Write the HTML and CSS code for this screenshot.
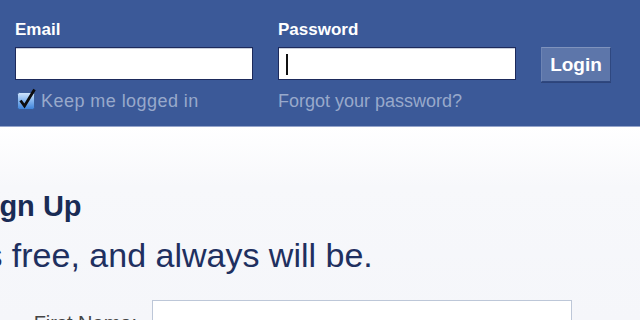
FILE: index.html
```html
<!DOCTYPE html>
<html>
<head>
<meta charset="utf-8">
<link rel="stylesheet" href="styles.css">
</head>
<body>
<div class="topbar">
  <form class="login">
    <label class="lbl">Email</label>
    <label class="lbl">Password</label>
    <span></span>
    <div class="field"></div>
    <div class="field"><span class="caret"></span></div>
    <button type="button" class="btn">Login</button>
    <div class="keep">
      <svg class="check" width="22" height="23" viewBox="0 0 22 23">
        <defs>
          <linearGradient id="cb" x1="0" y1="0" x2="0" y2="1">
            <stop offset="0" stop-color="#d3e6fc"/>
            <stop offset="0.5" stop-color="#82b4ef"/>
            <stop offset="1" stop-color="#3a80d8"/>
          </linearGradient>
        </defs>
        <rect x="1.5" y="4.5" width="17" height="17" rx="2" fill="url(#cb)" stroke="#3a5c98"/>
        <path d="M4.5 12.5 L8.5 18 L18.5 1.5" fill="none" stroke="#0d0d0d" stroke-width="2.8" stroke-linejoin="miter"/>
      </svg>
      <span class="keeptext">Keep me logged in</span>
    </div>
    <a class="forgot">Forgot your password?</a>
    <span></span>
  </form>
</div>
<div class="main">
  <div class="intro">
    <h1 class="title">Sign Up</h1>
    <p class="tagline">It's free, and always will be.</p>
  </div>
  <div class="row">
    <div class="rowlabel">First Name:</div>
    <div class="rowinput"></div>
  </div>
</div>
</body>
</html>
```
FILE: styles.css
```css
html, body {
  margin: 0;
  padding: 0;
  width: 640px;
  height: 320px;
  overflow: hidden;
  font-family: "Liberation Sans", Arial, sans-serif;
  background: #f5f6fa;
}

.topbar {
  background: #3b5998;
  height: 127px;
  box-sizing: border-box;
  padding: 21px 0 0 15px;
  border-bottom: 1px solid #95a5cb;
}

.login {
  display: grid;
  grid-template-columns: 238px 238px 70px;
  column-gap: 25px;
  row-gap: 8px;
  margin: 0;
}

.lbl {
  color: #fff;
  font-weight: bold;
  font-size: 17px;
  line-height: 18px;
}

.field {
  height: 33px;
  box-sizing: border-box;
  background: #fff;
  border: 1px solid #1d2a5b;
  box-shadow: inset 0 1px 0 #c9cfdc;
  position: relative;
}

.caret {
  position: absolute;
  left: 7px;
  top: 6px;
  width: 2px;
  height: 21px;
  background: #111;
}

.btn {
  height: 35px;
  width: 70px;
  box-sizing: border-box;
  margin: 0;
  padding: 0;
  background: #5d76aa;
  border: 1px solid #2f4880;
  border-top-color: #7f93bd;
  border-left-color: #6d84b4;
  box-shadow: 0 1px 0 #2d447a;
  color: #fff;
  font-family: "Liberation Sans", Arial, sans-serif;
  font-weight: bold;
  font-size: 19px;
  line-height: 31px;
}

.keep {
  display: flex;
  align-items: center;
  height: 22px;
}

.check {
  display: block;
  margin-left: 1px;
  margin-right: 3px;
  margin-top: -4px;
}

.keeptext, .forgot {
  color: #98a9cb;
  font-size: 18px;
  line-height: 22px;
}

.keeptext {
  letter-spacing: 0.45px;
}

.main {
  background: linear-gradient(#ffffff 0, #f7f8fb 60px, #f5f6fa 100%);
  height: 192px;
  padding-top: 62px;
  box-sizing: border-box;
}

.intro {
  margin-left: -40px;
}

.title {
  margin: 0 0 12px 12px;
  font-size: 29px;
  line-height: 34px;
  font-weight: bold;
  color: #1a2c55;
}

.tagline {
  margin: 0;
  font-size: 34px;
  line-height: 40px;
  color: #1f3060;
}

.row {
  display: grid;
  grid-template-columns: 137px 420px;
  column-gap: 15px;
  margin-top: 25px;
}

.rowlabel {
  text-align: right;
  font-size: 20px;
  line-height: 24px;
  padding-top: 11px;
  color: #444;
}

.rowinput {
  height: 32px;
  box-sizing: border-box;
  border: 1px solid #bdc7d8;
  background: #fff;
}
```
